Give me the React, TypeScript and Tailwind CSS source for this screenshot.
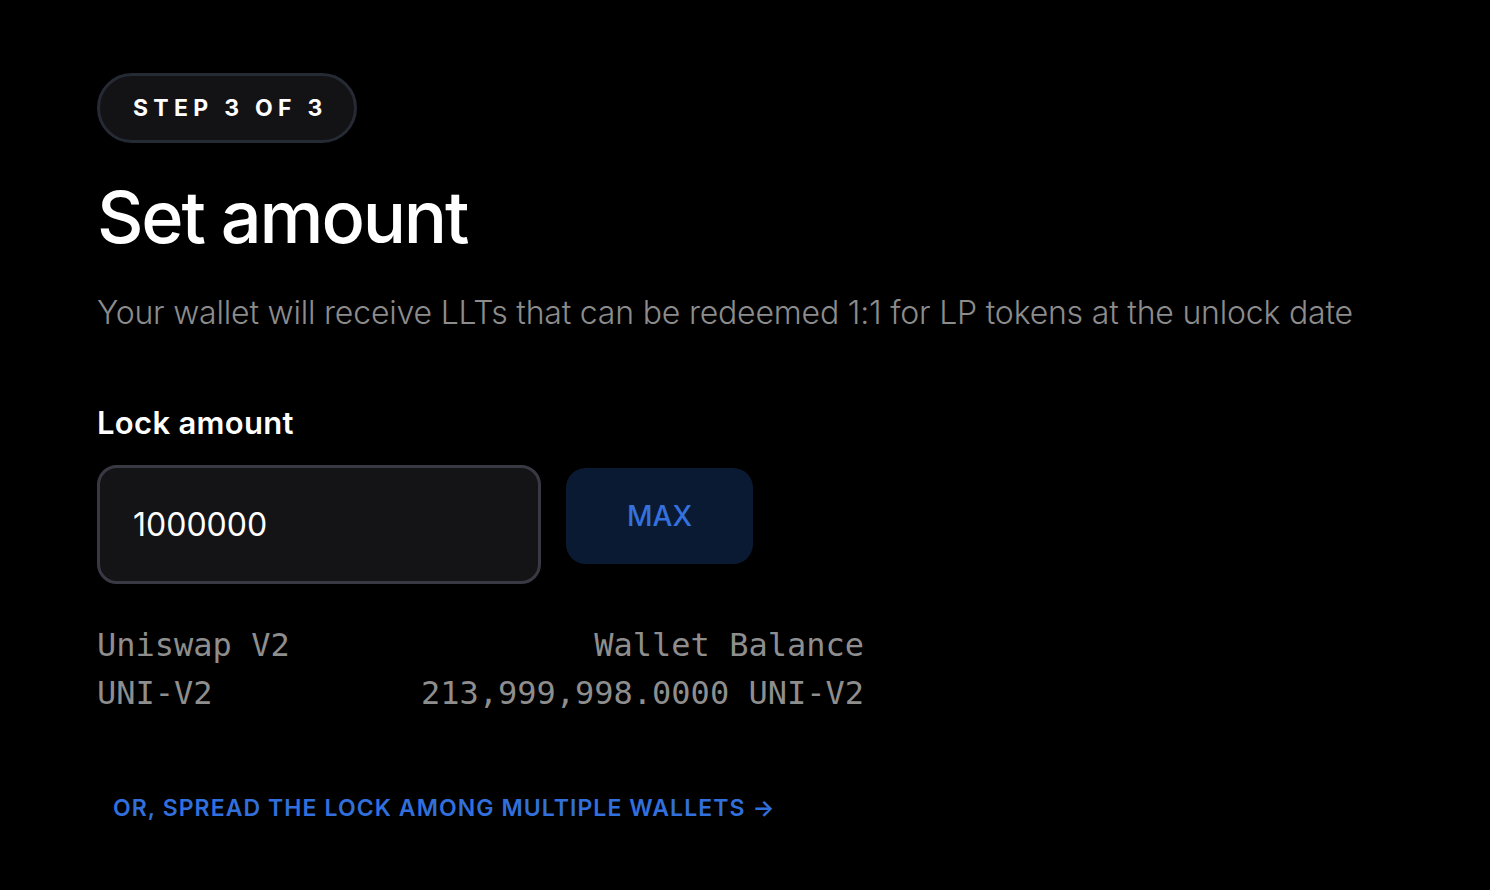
import React from 'react';

const App = () => {
  return (
    <div className="min-h-[890px] w-full bg-black px-[97px] pt-[73px] font-['Inter',sans-serif] text-white">
      {/* Step badge */}
      <div className="inline-flex h-[70px] items-center rounded-full border-[3px] border-[#252a35] bg-[#131316] pl-[33px] pr-[26px]">
        <span className="text-[23px] font-bold tracking-[0.23em] text-white">STEP 3 OF 3</span>
      </div>

      {/* Heading */}
      <h1 className="mt-[38px] text-[72px] font-medium leading-none tracking-[-0.03em]">Set amount</h1>
      <p className="mt-[40px] text-[32px] font-light leading-tight tracking-[-0.006em] text-[#8c8c8c]">
        Your wallet will receive LLTs that can be redeemed 1:1 for LP tokens at the unlock date
      </p>

      {/* Lock amount */}
      <div className="mt-[74px]">
        <label className="block text-[31px] font-semibold leading-none tracking-[0.01em]">Lock amount</label>
        <div className="mt-[27px] flex items-start gap-[25px]">
          <div className="flex h-[119px] w-[444px] items-center rounded-[20px] border-[3px] border-[#393943] bg-[#141417] px-[33px]">
            <span className="text-[32px] text-white">1000000</span>
          </div>
          <button className="mt-[3px] flex h-[96px] w-[187px] items-center justify-center rounded-[20px] bg-[#0b1a33] text-[28px] font-medium text-[#3471dd]">
            MAX
          </button>
        </div>
      </div>

      {/* Token info */}
      <div className="mt-[43px] flex w-[767px] flex-col gap-[12px] font-['DejaVu_Sans_Mono',monospace] text-[32px] leading-[36px] text-[#8e8e8e]">
        <div className="flex justify-between">
          <span>Uniswap V2</span>
          <span>Wallet Balance</span>
        </div>
        <div className="flex justify-between">
          <span>UNI-V2</span>
          <span>213,999,998.0000 UNI-V2</span>
        </div>
      </div>

      {/* Spread link */}
      <button className="mt-[86px] px-4 text-[23px] font-semibold leading-none tracking-[0.047em] text-[#3170dc]">
        OR, SPREAD THE LOCK AMONG MULTIPLE WALLETS →
      </button>
    </div>
  );
};

export default App;
